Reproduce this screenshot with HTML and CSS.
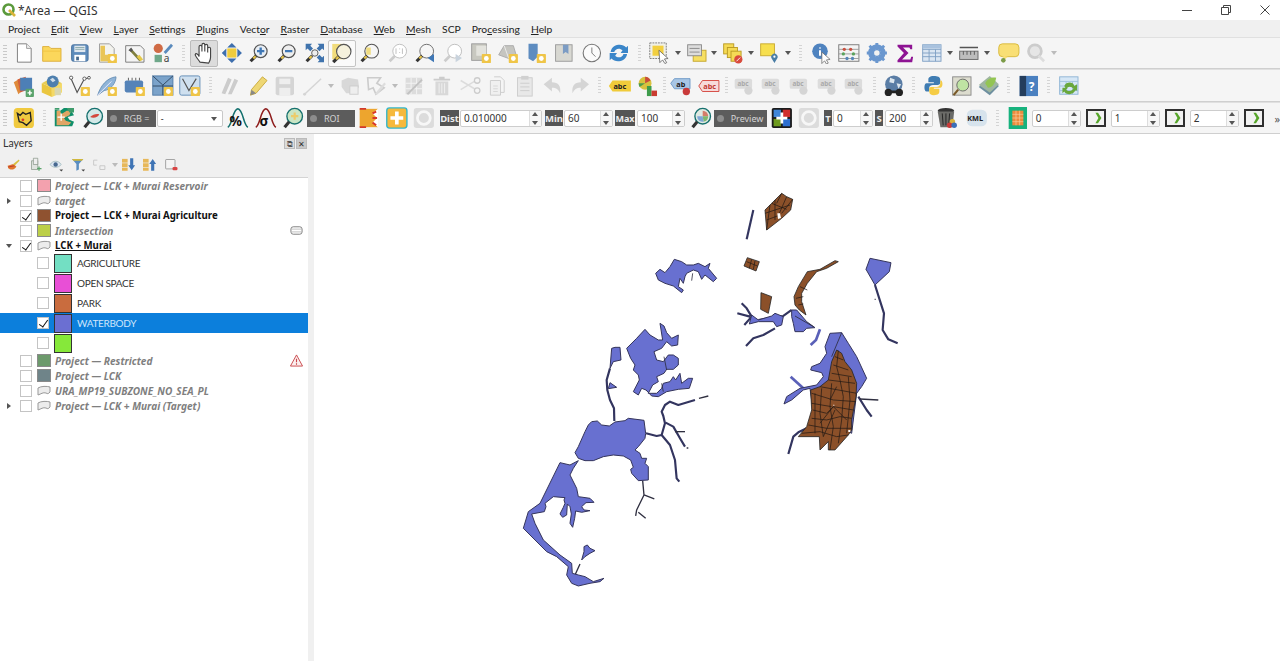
FILE: index.html
```html
<!DOCTYPE html>
<html lang="en">
<head>
<meta charset="utf-8">
<title>*Area — QGIS</title>
<link rel="stylesheet" href="styles.css">
</head>
<body>
<svg class="sprite" aria-hidden="true">
<defs>
<g id="st"><rect x="13" y="13" width="10" height="10" rx="1" fill="#efc548"/><circle cx="18" cy="18" r="2.6" fill="#fff"/></g>
<g id="mgl"><path d="M9 15L3 21" stroke="#333" stroke-width="3.4"/><path d="M8.5 15.500L6 18" stroke="#e8c64a" stroke-width="2.4"/></g>
<symbol id="new" viewBox="0 0 24 24"><path d="M5 2h10l5 5v15H5z" fill="#fff" stroke="#777"/><path d="M15 2v5h5" fill="#eee" stroke="#999"/></symbol>
<symbol id="open" viewBox="0 0 24 24"><path d="M2 5h7l2 2h11v14H2z" fill="#fbd75b" stroke="#dcae3a"/><path d="M2 10h20" stroke="#f2c544"/></symbol>
<symbol id="save" viewBox="0 0 24 24"><rect x="3" y="3" width="18" height="18" rx="2" fill="#5d8bbb" stroke="#47719d"/><rect x="6" y="4" width="12" height="7" fill="#dfe7ef"/><path d="M7 6h10M7 8h10" stroke="#8aa"/><rect x="6" y="14" width="12" height="7" fill="#fff"/><rect x="8" y="16" width="3" height="4" fill="#48698c"/></symbol>
<symbol id="prj" viewBox="0 0 24 24"><path d="M4 2h11l5 5v15H4z" fill="#f3f3ee" stroke="#999"/><path d="M5 4h5v10h7v7H5z" fill="#e9c556"/><use href="#st"/></symbol>
<symbol id="wrench" viewBox="0 0 24 24"><path d="M2 4h16l4 4v14H2z" fill="#f4f4f4" stroke="#777"/><path d="M7 8l11 12" stroke="#7f7f3e" stroke-width="3"/><path d="M5 9l3-3 2 3-2 2z" fill="#555"/><path d="M14 16l4 5 3-2-4-5z" fill="#e5c94a"/></symbol>
<symbol id="style" viewBox="0 0 24 24"><circle cx="7" cy="7" r="5" fill="#d06b45"/><path d="M14 12l8-9" stroke="#5b8bbd" stroke-width="3"/><rect x="3" y="14" width="8" height="8" fill="#6fa88a"/><text x="13" y="22" class="ta">a</text></symbol>
<symbol id="hand" viewBox="0 0 24 24"><path d="M8 21c-2-3-5-6-5-8 1-2 3 0 4 2V5c0-2 3-2 3 0v5-7c0-2 3-2 3 0v7-6c0-2 3-2 3 0v7-4c0-2 3-2 3 0v9c0 3-1 4-2 6z" fill="#fff" stroke="#444" stroke-width="1.200"/></symbol>
<symbol id="pansel" viewBox="0 0 24 24"><rect x="7" y="7" width="10" height="10" fill="#f0cc3d"/><path d="M12 1l5 5H7zM12 23l-5-5h10zM1 12l5-5v10zM23 12l-5 5V7z" fill="#3e6fae"/></symbol>
<symbol id="zin" viewBox="0 0 24 24"><circle cx="14" cy="10" r="7" fill="#e8eef5" stroke="#555" stroke-width="1.300"/><use href="#mgl"/><path d="M14 6v8M10 10h8" stroke="#3f77b5" stroke-width="2.600"/></symbol>
<symbol id="zout" viewBox="0 0 24 24"><circle cx="14" cy="10" r="7" fill="#eee" stroke="#555" stroke-width="1.300"/><use href="#mgl"/><path d="M10 10h8" stroke="#3f77b5" stroke-width="2.600"/></symbol>
<symbol id="zfull" viewBox="0 0 24 24"><path d="M2 2h7l-2 2 3 3-3 3-3-3-2 2zM22 2v7l-2-2-3 3-3-3 3-3-2-2zM22 22h-7l2-2-3-3 3-3 3 3 2-2z" fill="#3f73ad"/><circle cx="12" cy="12" r="3.500" fill="#eee" stroke="#555"/><use href="#mgl"/></symbol>
<symbol id="zsel" viewBox="0 0 24 24"><rect x="2" y="2" width="14" height="16" fill="#f1dc7b"/><circle cx="14" cy="10" r="7.500" fill="#f6f2dc" stroke="#555" stroke-width="1.200"/><use href="#mgl"/></symbol>
<symbol id="zlay" viewBox="0 0 24 24"><circle cx="14" cy="10" r="7.500" fill="#f6f6f6" stroke="#555" stroke-width="1.200"/><path d="M8 6h5v8H8z" fill="#f0dc80"/><use href="#mgl"/></symbol>
<symbol id="z11" viewBox="0 0 24 24"><circle cx="14" cy="10" r="7.500" fill="#fff" stroke="#bbb"/><path d="M10 7v6M14 7v1M14 11v1M17 7v6" stroke="#bbb"/><path d="M9 15l-6 6" stroke="#ccc" stroke-width="3"/></symbol>
<symbol id="zlast" viewBox="0 0 24 24"><circle cx="14" cy="10" r="7.500" fill="#f6f6f6" stroke="#666"/><use href="#mgl"/><path d="M22 13v9l-7-4.500z" fill="#3f77b5"/></symbol>
<symbol id="znext" viewBox="0 0 24 24"><circle cx="14" cy="10" r="7.500" fill="#fff" stroke="#bbb"/><path d="M9 15l-6 6" stroke="#ccc" stroke-width="3"/><path d="M15 13v9l7-4.500z" fill="#c9d3dd"/></symbol>
<symbol id="nmap" viewBox="0 0 24 24"><rect x="2" y="2" width="16" height="18" fill="#c8c8c0" stroke="#999"/><rect x="7" y="4" width="11" height="11" fill="#e3e3dd"/><use href="#st"/></symbol>
<symbol id="n3d" viewBox="0 0 24 24"><path d="M2 14L8 4h10l3 10-8 4z" fill="#c5c5c0" stroke="#aaa"/><path d="M8 4l5 14" stroke="#eee"/><use href="#st"/></symbol>
<symbol id="bmk" viewBox="0 0 24 24"><path d="M4 2h10v14l-5 5-5-3z" fill="#5d8cc0"/><use href="#st"/></symbol>
<symbol id="bmk2" viewBox="0 0 24 24"><rect x="3" y="3" width="18" height="18" fill="#d8d8d2" stroke="#999"/><path d="M11 3h6v10l-3-2-3 2z" fill="#7c9cc4"/></symbol>
<symbol id="clock" viewBox="0 0 24 24"><circle cx="12" cy="12" r="9.500" fill="#fbfbfb" stroke="#777" stroke-width="1.200"/><path d="M12 6v6l4 4" stroke="#777" fill="none"/></symbol>
<symbol id="ref" viewBox="0 0 24 24"><path d="M3 11C4 5 9 3 13 3c3 0 5 1 7 3l2-2v8h-8l2-3c-3-3-8-2-9 2zM21 13c-1 6-6 8-10 8-3 0-5-1-7-3l-2 2v-8h8l-2 3c3 3 8 2 9-2z" fill="#3b86c9"/></symbol>
<symbol id="sel" viewBox="0 0 24 24"><rect x="1" y="1" width="18" height="17" fill="#f0f0e8" stroke="#777" stroke-dasharray="2 1"/><rect x="4" y="4" width="12" height="11" fill="#f2cf3f"/><path d="M11 9l10 9-4 .5 2.500 4-2 1-2.500-4-3 3z" fill="#fff" stroke="#555" stroke-width=".8"/></symbol>
<symbol id="form" viewBox="0 0 24 24"><rect x="8" y="9" width="14" height="12" fill="#f6df62" stroke="#c4a52b"/><rect x="2" y="3" width="15" height="12" fill="#ddd" stroke="#888"/><path d="M4 7h11M4 11h11" stroke="#888"/></symbol>
<symbol id="desel" viewBox="0 0 24 24"><rect x="2" y="2" width="11" height="11" fill="#f5da55" stroke="#b99a22"/><rect x="6" y="6" width="11" height="11" fill="#f5da55" stroke="#b99a22"/><rect x="10" y="10" width="11" height="11" fill="#f5da55" stroke="#b99a22"/><circle cx="18" cy="19" r="4.500" fill="#d94a3e"/><path d="M16 21l4-4" stroke="#fff"/></symbol>
<symbol id="loc" viewBox="0 0 24 24"><rect x="2" y="2" width="15" height="13" fill="#f7df4e" stroke="#c9a92c"/><path d="M17 23l-3-5a3.500 3.500 0 1 1 6 0z" fill="#4a7ea6"/><circle cx="17" cy="16" r="1.200" fill="#fff"/></symbol>
<symbol id="info" viewBox="0 0 24 24"><circle cx="10" cy="10" r="8.500" fill="#4f83bf"/><path d="M10 6v1M10 9v6" stroke="#fff" stroke-width="2.200"/><path d="M12 11l9 8-4 .5 2 3.500-2 1-2-3.500-3 3z" fill="#fff" stroke="#666" stroke-width=".8"/></symbol>
<symbol id="abac" viewBox="0 0 24 24"><rect x="1" y="3" width="22" height="18" fill="#f4f4f4" stroke="#777"/><path d="M1 8h22M1 13h22M1 18h22" stroke="#999"/><circle cx="7" cy="8" r="1.800" fill="#c9503f"/><circle cx="14" cy="8" r="1.800" fill="#c9503f"/><circle cx="6" cy="13" r="1.800" fill="#5aa25c"/><circle cx="17" cy="13" r="1.800" fill="#5aa25c"/><circle cx="10" cy="18" r="1.800" fill="#5786b9"/><circle cx="16" cy="18" r="1.800" fill="#5786b9"/></symbol>
<symbol id="gear" viewBox="0 0 24 24"><circle cx="12" cy="12" r="7" fill="none" stroke="#6a97cf" stroke-width="5"/><path d="M12 1v22M1 12h22M4 4l16 16M20 4L4 20" stroke="#6a97cf" stroke-width="3.200"/><circle cx="12" cy="12" r="3" fill="#f2f2f2"/></symbol>
<symbol id="sig" viewBox="0 0 24 24"><path d="M4 3h16v5h-2l-1-2H10l6 6-7 7h9l1-3h2l-1 6H4v-2l7-8-7-7z" fill="#8e1493"/></symbol>
<symbol id="tbl" viewBox="0 0 24 24"><rect x="2" y="3" width="20" height="18" fill="#dbe6f2" stroke="#7fa0c4"/><path d="M2 8h20M2 12h20M2 16h20M9 8v13M16 8v13" stroke="#7fa0c4"/><rect x="2" y="3" width="20" height="4" fill="#a9c2de"/></symbol>
<symbol id="rule" viewBox="0 0 24 24"><path d="M2 6h20" stroke="#555" stroke-width="1.500"/><rect x="2" y="10" width="20" height="9" fill="#bdbdbd" stroke="#666"/><path d="M6 10v4M10 10v4M14 10v4M18 10v4" stroke="#555"/></symbol>
<symbol id="cmt" viewBox="0 0 24 24"><rect x="1" y="2" width="22" height="14" rx="4" fill="#f9df75" stroke="#d8b93c"/><path d="M6 15l-1 6 6-5z" fill="#f9df75"/><circle cx="6" cy="20" r="2.500" fill="#7c9b48"/></symbol>
<symbol id="srch" viewBox="0 0 24 24"><circle cx="11" cy="10" r="7" fill="#e6e6e6" stroke="#ccc" stroke-width="3"/><path d="M15 15l6 6" stroke="#ddd" stroke-width="3"/></symbol>
<symbol id="dsm" viewBox="0 0 24 24"><path d="M1 8l8-5 3 12-6 6z" fill="#df8a3a"/><path d="M5 5l9-3 2 14-8 3z" fill="#d2603c"/><rect x="8" y="3" width="13" height="14" fill="#4d7fb6"/><rect x="14" y="15" width="9" height="9" rx="1" fill="#5aa36b"/><path d="M18.500 17v5M16 19.500h5" stroke="#fff" stroke-width="1.600"/></symbol>
<symbol id="sdb" viewBox="0 0 24 24"><path d="M1 9l11 5v10L1 19z" fill="#eac63f"/><path d="M12 14l11-5v10l-11 5z" fill="#f4d964"/><path d="M1 9l11-6 11 6-11 5z" fill="#e7cc55"/><circle cx="13" cy="7" r="6.500" fill="#4e7fae"/><path d="M10 5l3-2 3 3-3 2z" fill="#cfdde9"/><rect x="15" y="14" width="7" height="8" fill="#d8d6b0"/></symbol>
<symbol id="vnode" viewBox="0 0 24 24"><path d="M2 3l7 16 8-15 6-1" fill="none" stroke="#555" stroke-width="1.300"/><circle cx="2.500" cy="3" r="1.800" fill="#fff" stroke="#555"/><circle cx="17" cy="4" r="1.800" fill="#fff" stroke="#555"/><circle cx="22" cy="3" r="1.500" fill="#fff" stroke="#555"/><use href="#st"/></symbol>
<symbol id="feath" viewBox="0 0 24 24"><path d="M2 22C5 12 12 3 22 2c0 6-5 14-13 15z" fill="#8fb4d8" stroke="#6a90b6"/><path d="M2 22L17 7" stroke="#eef" /><use href="#st"/></symbol>
<symbol id="chip" viewBox="0 0 24 24"><rect x="1" y="6" width="20" height="13" rx="2" fill="#5583b8"/><path d="M5 3v3M9 3v3M13 3v3M17 3v3" stroke="#555"/><use href="#st"/></symbol>
<symbol id="mesh" viewBox="0 0 24 24"><rect x="1" y="1" width="22" height="21" fill="#7ba3ca" stroke="#4f7aa6"/><path d="M1 1l11 10L23 1M1 12h22M12 11v11" stroke="#2e4660" stroke-width="1" fill="none"/><use href="#st"/></symbol>
<symbol id="vrt" viewBox="0 0 24 24"><rect x="1" y="1" width="22" height="21" rx="2" fill="#cfe0ef" stroke="#5d89b3"/><path d="M4 4l7 13 8-13" stroke="#555" fill="none" stroke-width="1.300"/><use href="#st"/></symbol>
<symbol id="pens" viewBox="0 0 24 24"><path d="M3 20L10 3l4 2-7 16zM10 21l7-17 4 2-7 15z" fill="#ccc"/></symbol>
<symbol id="pen" viewBox="0 0 24 24"><path d="M4 22l1-6L17 2l5 4L10 20z" fill="#eed775" stroke="#c9a83a"/><path d="M4 22l1-6 5 4z" fill="#888"/></symbol>
<symbol id="fsave" viewBox="0 0 24 24"><rect x="2" y="2" width="20" height="20" rx="2" fill="#d5d5d5"/><rect x="6" y="4" width="12" height="6" fill="#eee"/><rect x="6" y="14" width="12" height="8" fill="#eee"/></symbol>
<symbol id="fline" viewBox="0 0 24 24"><path d="M3 21L21 4" stroke="#d5d5d5" stroke-width="1.600"/><circle cx="3" cy="21" r="1.600" fill="#d5d5d5"/></symbol>
<symbol id="fpoly" viewBox="0 0 24 24"><path d="M3 6l7-3 11 2 1 8-5 7H8L3 13z" fill="#d8d8d8"/><rect x="12" y="12" width="9" height="9" fill="#eee" stroke="#ccc"/></symbol>
<symbol id="fedit" viewBox="0 0 24 24"><path d="M2 3h14l-4 6 8 5-9 7-3-7-5 2z" fill="none" stroke="#ccc" stroke-width="1.800"/><path d="M11 21L21 9" stroke="#ddd" stroke-width="2.400"/></symbol>
<symbol id="fgrid" viewBox="0 0 24 24"><rect x="3" y="3" width="18" height="18" fill="#dcdcdc"/><path d="M3 9h18M3 15h18M9 3v18M15 3v18" stroke="#f4f4f4"/><path d="M5 21L21 5" stroke="#c2c2c2" stroke-width="2"/></symbol>
<symbol id="ftrash" viewBox="0 0 24 24"><path d="M3 5h18M9 3h6" stroke="#ccc" stroke-width="2"/><path d="M5 7h14v15H5z" fill="#d8d8d8"/><path d="M9 9v11M12 9v11M15 9v11" stroke="#f2f2f2"/></symbol>
<symbol id="fcut" viewBox="0 0 24 24"><path d="M2 6l15 9M2 16l15-9" stroke="#dcdcdc" stroke-width="1.600"/><circle cx="20" cy="6" r="3" fill="none" stroke="#ccc" stroke-width="1.400"/><circle cx="20" cy="17" r="3" fill="none" stroke="#ccc" stroke-width="1.400"/></symbol>
<symbol id="fcopy" viewBox="0 0 24 24"><path d="M5 6h11v16H5z" fill="#f0f0f0" stroke="#ccc"/><path d="M9 2h7l4 4v13h-4" fill="none" stroke="#ccc"/><path d="M8 12h5M8 15h5M8 18h5" stroke="#d5d5d5"/></symbol>
<symbol id="fpaste" viewBox="0 0 24 24"><rect x="4" y="3" width="16" height="20" fill="#e8e8e8" stroke="#ccc"/><rect x="8" y="1" width="8" height="4" fill="#d0d0d0"/><path d="M7 9h10M7 13h10M7 17h10" stroke="#ccc"/></symbol>
<symbol id="fundo" viewBox="0 0 24 24"><path d="M2 10l9-7v5c7 0 10 4 9 12-2-4-4-6-9-6v4z" fill="#d5d5d5"/></symbol>
<symbol id="fredo" viewBox="0 0 24 24"><path d="M22 10l-9-7v5C6 8 3 12 4 20c2-4 4-6 9-6v4z" fill="#d5d5d5"/></symbol>
<symbol id="lab" viewBox="0 0 24 24"><path d="M0 12l4-6h20v12H4z" fill="#f0cb3a"/><text x="5" y="15.500" class="tl">abc</text></symbol>
<symbol id="lstyle" viewBox="0 0 24 24"><circle cx="9" cy="9" r="7" fill="#d8c23e"/><path d="M9 9V2a7 7 0 0 1 6 4z" fill="#c94c3c"/><path d="M9 9l-6 4a7 7 0 0 1-1-4z" fill="#4c9c4f"/><rect x="11" y="12" width="5" height="11" fill="#3e9c4c"/><rect x="16" y="17" width="6" height="6" fill="#c93c30"/></symbol>
<symbol id="lpin" viewBox="0 0 24 24"><path d="M1 9l4-5h17v11H5z" fill="#a8c6e6" stroke="#6b97c6"/><text x="7" y="13" class="tl">ab</text><circle cx="18" cy="18" r="4" fill="#c93a3a"/></symbol>
<symbol id="lred" viewBox="0 0 24 24"><path d="M1 12l4-6h18v12H5z" fill="#f7dada" stroke="#d3443c"/><text x="6" y="15.500" class="tr">abc</text></symbol>
<symbol id="fl" viewBox="0 0 24 24"><rect x="2" y="4" width="19" height="11" rx="2" fill="#dcdcdc"/><text x="5" y="12.500" class="tf">abc</text><circle cx="17" cy="17" r="4.500" fill="#d5d5d5"/></symbol>
<symbol id="globe" viewBox="0 0 24 24"><circle cx="12" cy="10" r="9.500" fill="#5a7da5"/><path d="M8 3l5 2-1 4-5-1zM15 9l5 1-3 5z" fill="#dce6ee"/><circle cx="6" cy="19" r="4" fill="#222"/><circle cx="18" cy="19" r="4" fill="#222"/><path d="M9 17h6v3H9z" fill="#222"/></symbol>
<symbol id="py" viewBox="0 0 24 24"><path d="M12 1c-5 0-6 2-6 4v3h6v1H4c-3 0-3 9 0 9h3v-4c0-2 2-3 4-3h5c2 0 3-1 3-3V5c0-3-3-4-7-4z" fill="#3f7cb2"/><path d="M12 22c5 0 6-2 6-4v-3h-6v-1h7c3 0 3-7 1-8h-1v3c0 3-2 4-4 4H9c-2 0-2 2-2 3v2c0 3 2 4 5 4z" fill="#f5cc45"/></symbol>
<symbol id="mgfy" viewBox="0 0 24 24"><rect x="2" y="2" width="20" height="20" fill="#dcdcce" stroke="#888"/><circle cx="13" cy="11" r="6.500" fill="#bfe4a3" stroke="#666"/><path d="M8 16l-5 6" stroke="#7a5a2a" stroke-width="2.400"/></symbol>
<symbol id="plug" viewBox="0 0 24 24"><path d="M1 13L13 3l10 9-10 10z" fill="#6e8fa0"/><path d="M1 11L13 1l10 9-10 9z" fill="#9fb6a0"/><path d="M8 9c2-5 8-7 12-6-1 6-4 11-9 11z" fill="#93c553"/></symbol>
<symbol id="help" viewBox="0 0 24 24"><rect x="2" y="1" width="20" height="22" fill="#4a80c0"/><rect x="2" y="1" width="7" height="22" fill="#243d5c"/><text x="12" y="17" class="tq">?</text></symbol>
<symbol id="sync" viewBox="0 0 24 24"><rect x="2" y="2" width="20" height="19" fill="#d6e7f6" stroke="#8cb3d4"/><path d="M2 7h20M2 12h20M2 17h20M9 7v14M16 7v14" stroke="#9fc1dc"/><path d="M7 12c2-5 10-5 11 0l3-2v7h-6l2-2c-2-3-6-3-8 0zM19 17c-2 5-10 5-12 1l-2 2v-6h6l-2 2c2 2 5 2 7 0z" fill="#69a83c"/></symbol>
<symbol id="scp" viewBox="0 0 24 24"><rect x="1" y="1" width="22" height="22" rx="4" fill="#f0c93f"/><path d="M5 7l3 2 3-3 3 2 5-2 1 9-5 5-4-3-4-1z" fill="none" stroke="#222" stroke-width="1.500"/><circle cx="11" cy="14" r="1.500" fill="#d63b2c"/></symbol>
<symbol id="roig" viewBox="0 0 24 24"><path d="M1 21V3l6 1 4-3h11l-2 5 2 3-7 2 2 3 5 2-2 5H8z" fill="#0f8f6a"/><path d="M3 20V4h4l1 4 6-4 5 0-2 5-6 3 2 3 6 2-3 3z" fill="#e0a565"/><path d="M8 7v8M4 11h8" stroke="#fff" stroke-width="1.500"/><path d="M14 1h8v5h-5zM1 1h5v2H1z" fill="#3f9c6c"/></symbol>
<symbol id="roi" viewBox="0 0 24 24"><rect x="2" y="2" width="20" height="20" fill="#eda52e"/><path d="M22 2l-6 5 5 5-5 5 6 5z" fill="#fff"/><path d="M2 2l7 0M2 22l7 0" stroke="#d23a2c" stroke-width="2"/><path d="M16 7l4-2M16 12l5 0M16 17l4 3" stroke="#d8352a" stroke-width="2"/></symbol>
<symbol id="zred" viewBox="0 0 24 24"><circle cx="14" cy="10" r="8.500" fill="#d3e9e8" stroke="#17716f" stroke-width="1.500"/><path d="M9 11c3-3 7-4 10-3-1 3-6 5-10 3z" fill="#d4483c"/><path d="M8 16l-5 6" stroke="#333" stroke-width="3.400"/></symbol>
<symbol id="zgreen" viewBox="0 0 24 24"><circle cx="14" cy="10" r="8.500" fill="#c9e5c4" stroke="#17716f" stroke-width="1.500"/><path d="M14 6v8M10 10h8" stroke="#eccb6a" stroke-width="2.400"/><path d="M8 16l-5 6" stroke="#333" stroke-width="3.400"/></symbol>
<symbol id="zrgb" viewBox="0 0 24 24"><circle cx="14" cy="10" r="8.500" fill="#dfe9e2" stroke="#17716f" stroke-width="1.500"/><path d="M14 10V4a6 6 0 0 1 6 6z" fill="#d47d6a"/><path d="M14 10h6a6 6 0 0 1-5 6z" fill="#7fb86f"/><path d="M14 10l1 6a6 6 0 0 1-7-6z" fill="#7fa6d6"/><path d="M8 16l-5 6" stroke="#333" stroke-width="3.400"/></symbol>
<symbol id="cpct" viewBox="0 0 24 24"><path d="M1 22C6 20 6 3 12 2c6 1 6 18 11 20" fill="none" stroke="#14706e" stroke-width="1.700"/><text x="3" y="21" class="tk">%</text></symbol>
<symbol id="csig" viewBox="0 0 24 24"><path d="M1 22C6 20 6 3 12 2c6 1 6 18 11 20" fill="none" stroke="#8f1f1f" stroke-width="1.700"/><text x="5" y="21" class="tk">σ</text></symbol>
<symbol id="addroi" viewBox="0 0 24 24"><rect x="1" y="1" width="22" height="22" rx="3" fill="#f6b93c" stroke="#35b6c9" stroke-width="1.500"/><path d="M12 5v14M5 12h14" stroke="#fff" stroke-width="4"/></symbol>
<symbol id="redo" viewBox="0 0 24 24"><rect x="1" y="1" width="22" height="22" rx="3" fill="#dcdcdc"/><circle cx="12" cy="12" r="7" fill="none" stroke="#f7f7f7" stroke-width="3"/></symbol>
<symbol id="plus" viewBox="0 0 24 24"><rect x="1" y="1" width="22" height="22" rx="2" fill="#1c1c1c"/><rect x="3" y="3" width="8" height="8" fill="#3f86d9"/><rect x="13" y="3" width="8" height="8" fill="#cf2d2d"/><rect x="3" y="13" width="8" height="8" fill="#6d9a1d"/><rect x="13" y="13" width="8" height="8" fill="#2d6fd0"/><path d="M12 6v12M6 12h12" stroke="#fff" stroke-width="3"/></symbol>
<symbol id="bin" viewBox="0 0 24 24"><ellipse cx="11" cy="4" rx="9" ry="3" fill="#333"/><path d="M2 5h18l-2 17H5z" fill="#6b6b68"/><path d="M7 7l1 13M11 7v13M15 7l-1 13" stroke="#222"/><circle cx="18" cy="16" r="3" fill="#d8b23c"/><circle cx="15" cy="20" r="3" fill="#c83a3a"/><circle cx="20" cy="20" r="3" fill="#3b6fb8"/></symbol>
<symbol id="kml" viewBox="0 0 24 24"><rect x="1" y="3" width="22" height="18" rx="6" fill="#d7e3ec"/><text x="1.500" y="15" class="tm">KML</text></symbol>
<symbol id="band" viewBox="0 0 24 24"><rect x="2" y="0" width="20" height="24" fill="#17b27d"/><rect x="6" y="4" width="12" height="16" fill="#ee8b3d"/><path d="M6 8h12M6 12h12M6 16h12M10 4v16M14 4v16" stroke="#f5d0a0" stroke-width=".7"/></symbol>
<symbol id="brush" viewBox="0 0 24 24"><path d="M3 14l9-3 5 4c-2 5-9 7-13 3z" fill="#e0782e"/><path d="M12 11l9-7 1 2-8 8z" fill="#d8c03f"/><path d="M4 16l10-2" stroke="#c23b2c" stroke-width="2"/></symbol>
<symbol id="addlay" viewBox="0 0 24 24"><path d="M6 6h10v14H6z" fill="#dfe3df" stroke="#7a8a7a"/><path d="M9 2h7v10H9z" fill="#eee" stroke="#7a8a7a"/><path d="M18 15v7M15 18.500h7" stroke="#5aa36b" stroke-width="2"/></symbol>
<symbol id="eye" viewBox="0 0 24 24"><path d="M2 12c5-7 13-7 18 0-5 6-13 6-18 0z" fill="#dde6f2" stroke="#8aa"/><circle cx="11" cy="12" r="3.500" fill="#46688f"/><path d="M17 20h6l-3 3z" fill="#444"/></symbol>
<symbol id="filt" viewBox="0 0 24 24"><path d="M2 3h18l-7 8v9l-4 2V11z" fill="#5a8ec2"/><path d="M2 3h18l-2 3H4z" fill="#d2b83c"/><path d="M17 20h6l-3 3z" fill="#444"/></symbol>
<symbol id="grp" viewBox="0 0 24 24"><path d="M3 5h6M3 5v8h5M13 14h8v6h-8z" fill="none" stroke="#c8c8c8" stroke-width="1.500"/></symbol>
<symbol id="expd" viewBox="0 0 24 24"><rect x="2" y="3" width="9" height="6" fill="#e7b85a"/><rect x="2" y="10" width="9" height="6" fill="#e7b85a"/><rect x="2" y="17" width="9" height="5" fill="#e7b85a"/><path d="M15 2h5v11h3l-5.500 8L12 13h3z" fill="#3f74b5"/></symbol>
<symbol id="coll" viewBox="0 0 24 24"><rect x="2" y="3" width="9" height="6" fill="#e7b85a"/><rect x="2" y="10" width="9" height="6" fill="#e7b85a"/><rect x="2" y="17" width="9" height="5" fill="#e7b85a"/><path d="M15 22h5V11h3L17.500 3 12 11h3z" fill="#3f74b5"/></symbol>
<symbol id="rem" viewBox="0 0 24 24"><rect x="3" y="4" width="15" height="15" rx="1" fill="#f4f4f4" stroke="#777"/><rect x="14" y="16" width="8" height="5" rx="2" fill="#d94545"/></symbol>
<symbol id="gico" viewBox="0 0 14 12"><path d="M1 3c3-2 9-2 12-1v5c-2 2-2 2-4 1-3-1-5 1-8 2z" fill="#ececec" stroke="#999"/></symbol>
<symbol id="warn" viewBox="0 0 14 14"><path d="M7 1l6.500 12H.5z" fill="#fbeeee" stroke="#c9454a"/><path d="M7 5v4M7 10v1.500" stroke="#c9454a" stroke-width="1.200"/></symbol>
<symbol id="mem" viewBox="0 0 14 14"><rect x="1" y="3" width="12" height="8" rx="2.500" fill="#fff" stroke="#777"/><path d="M1 5.500h12M1 8.500h12" stroke="#bbb"/></symbol>
<symbol id="chev" viewBox="0 0 14 14"><path d="M4 1h3l4 6-4 6H4l3.500-6z" fill="#57a62a"/></symbol>
</defs>
</svg>

<header class="titlebar">
  <svg class="qlogo" viewBox="0 0 14 14"><circle cx="6.500" cy="6.500" r="5" fill="none" stroke="#5b9a3c" stroke-width="2.600"/><path d="M7 7l6 6" stroke="#d9b43a" stroke-width="2.600"/></svg>
  <span class="wintitle">*Area — QGIS</span>
  <div class="winctl">
    <svg class="wc" viewBox="0 0 12 12"><path d="M1 6.500h10" stroke="#444"/></svg>
    <svg class="wc" viewBox="0 0 12 12"><path d="M1.500 3.500h7v7h-7zM3.500 3.500v-2h7v7h-2" fill="none" stroke="#444"/></svg>
    <svg class="wc" viewBox="0 0 12 12"><path d="M1.500 1.500l9 9M10.500 1.500l-9 9" stroke="#444"/></svg>
  </div>
</header>

<nav class="menubar">
  <span class="m">Pro<u>j</u>ect</span>
  <span class="m"><u>E</u>dit</span>
  <span class="m"><u>V</u>iew</span>
  <span class="m"><u>L</u>ayer</span>
  <span class="m"><u>S</u>ettings</span>
  <span class="m"><u>P</u>lugins</span>
  <span class="m">Vect<u>o</u>r</span>
  <span class="m"><u>R</u>aster</span>
  <span class="m"><u>D</u>atabase</span>
  <span class="m"><u>W</u>eb</span>
  <span class="m"><u>M</u>esh</span>
  <span class="m">SCP</span>
  <span class="m">Pro<u>c</u>essing</span>
  <span class="m"><u>H</u>elp</span>
</nav>

<section class="tb tb1">
  <i class="grip"></i>
  <svg class="i"><use href="#new"/></svg><svg class="i"><use href="#open"/></svg><svg class="i"><use href="#save"/></svg><svg class="i"><use href="#prj"/></svg><svg class="i"><use href="#wrench"/></svg><svg class="i"><use href="#style"/></svg>
  <i class="sep s14"></i>
  <svg class="i on"><use href="#hand"/></svg><svg class="i"><use href="#pansel"/></svg><svg class="i"><use href="#zin"/></svg><svg class="i"><use href="#zout"/></svg><svg class="i"><use href="#zfull"/></svg><svg class="i box"><use href="#zsel"/></svg><svg class="i"><use href="#zlay"/></svg><svg class="i"><use href="#z11"/></svg><svg class="i"><use href="#zlast"/></svg><svg class="i"><use href="#znext"/></svg><svg class="i"><use href="#nmap"/></svg><svg class="i"><use href="#n3d"/></svg><svg class="i"><use href="#bmk"/></svg><svg class="i"><use href="#bmk2"/></svg><svg class="i"><use href="#clock"/></svg><svg class="i"><use href="#ref"/></svg>
  <i class="sep s13"></i>
  <svg class="i"><use href="#sel"/></svg><b class="caret"></b><svg class="i"><use href="#form"/></svg><b class="caret"></b><svg class="i"><use href="#desel"/></svg><b class="caret"></b><svg class="i"><use href="#loc"/></svg><b class="caret"></b>
  <i class="sep s15"></i>
  <svg class="i"><use href="#info"/></svg><svg class="i"><use href="#abac"/></svg><svg class="i"><use href="#gear"/></svg><svg class="i"><use href="#sig"/></svg><svg class="i"><use href="#tbl"/></svg><b class="caret"></b><svg class="i"><use href="#rule"/></svg><b class="caret"></b><i class="s3"></i><svg class="i"><use href="#cmt"/></svg><svg class="i"><use href="#srch"/></svg><b class="caret light"></b>
</section>

<section class="tb tb2">
  <i class="grip"></i>
  <svg class="i"><use href="#dsm"/></svg><svg class="i"><use href="#sdb"/></svg><svg class="i"><use href="#vnode"/></svg><svg class="i"><use href="#feath"/></svg><svg class="i"><use href="#chip"/></svg><svg class="i"><use href="#mesh"/></svg><svg class="i"><use href="#vrt"/></svg>
  <i class="sep s12"></i>
  <svg class="i"><use href="#pens"/></svg><svg class="i"><use href="#pen"/></svg><svg class="i"><use href="#fsave"/></svg><svg class="i"><use href="#fline"/></svg><b class="caret light"></b><svg class="i"><use href="#fpoly"/></svg><svg class="i"><use href="#fedit"/></svg><b class="caret light"></b><svg class="i"><use href="#fgrid"/></svg><svg class="i"><use href="#ftrash"/></svg><svg class="i"><use href="#fcut"/></svg><svg class="i"><use href="#fcopy"/></svg><svg class="i"><use href="#fpaste"/></svg><svg class="i"><use href="#fundo"/></svg><svg class="i"><use href="#fredo"/></svg>
  <i class="sep s12"></i>
  <svg class="i"><use href="#lab"/></svg><svg class="i"><use href="#lstyle"/></svg>
  <i class="sep s6"></i>
  <svg class="i"><use href="#lpin"/></svg><svg class="i"><use href="#lred"/></svg>
  <i class="sep s7"></i>
  <svg class="i"><use href="#fl"/></svg><svg class="i"><use href="#fl"/></svg><svg class="i"><use href="#fl"/></svg><svg class="i"><use href="#fl"/></svg><svg class="i"><use href="#fl"/></svg>
  <i class="sep s12"></i>
  <svg class="i"><use href="#globe"/></svg>
  <i class="sep s12"></i>
  <svg class="i"><use href="#py"/></svg><svg class="i"><use href="#mgfy"/></svg><svg class="i"><use href="#plug"/></svg>
  <i class="sep s12"></i>
  <svg class="i"><use href="#help"/></svg>
  <i class="sep s12"></i>
  <svg class="i"><use href="#sync"/></svg>
</section>

<section class="tb tb3">
  <i class="grip"></i>
  <svg class="i"><use href="#scp"/></svg>
  <i class="sep s14"></i>
  <svg class="i"><use href="#roig"/></svg><svg class="i"><use href="#zred"/></svg>
  <span class="pill rgb"><i class="dot"></i>RGB =</span>
  <span class="combo">-<b class="caret in"></b></span>
  <svg class="i"><use href="#cpct"/></svg><svg class="i"><use href="#csig"/></svg><svg class="i"><use href="#zgreen"/></svg>
  <span class="pill roil"><i class="dot"></i>ROI</span>
  <svg class="i"><use href="#roi"/></svg><svg class="i"><use href="#addroi"/></svg><svg class="i"><use href="#redo"/></svg>
  <span class="tag tag-dist">Dist</span><span class="spin sp-dist">0.010000<b class="ar"></b></span>
  <span class="tag tag-min">Min</span><span class="spin sp-min">60<b class="ar"></b></span>
  <span class="tag tag-max">Max</span><span class="spin sp-max">100<b class="ar"></b></span>
  <i class="s2"></i>
  <svg class="i"><use href="#zrgb"/></svg>
  <span class="pill prev"><i class="dot"></i>Preview</span>
  <svg class="i"><use href="#plus"/></svg><svg class="i"><use href="#redo"/></svg>
  <span class="tag tag-t">T</span><span class="spin sp-t">0<b class="ar"></b></span>
  <span class="tag tag-s">S</span><span class="spin sp-s">200<b class="ar"></b></span>
  <svg class="i"><use href="#bin"/></svg><i class="s2"></i><svg class="i"><use href="#kml"/></svg>
  <i class="sep s14"></i>
  <svg class="i"><use href="#band"/></svg>
  <span class="spin sp-b">0<b class="ar"></b></span><span class="go"><svg class="ch"><use href="#chev"/></svg></span>
  <span class="spin sp-b">1<b class="ar"></b></span><span class="go"><svg class="ch"><use href="#chev"/></svg></span>
  <span class="spin sp-b">2<b class="ar"></b></span><span class="go"><svg class="ch"><use href="#chev"/></svg></span>
  <span class="more">»</span>
</section>

<main class="work">
  <aside class="dock">
    <div class="dock-head"><span class="dock-title">Layers</span>
      <span class="dock-btns"><i class="db">⧉</i><i class="db dark">✕</i></span></div>
    <div class="dock-tools">
      <svg class="t"><use href="#brush"/></svg><svg class="t"><use href="#addlay"/></svg><svg class="t"><use href="#eye"/></svg><svg class="t"><use href="#filt"/></svg><svg class="t"><use href="#grp"/></svg><b class="caret light"></b><svg class="t t2"><use href="#expd"/></svg><svg class="t"><use href="#coll"/></svg><svg class="t"><use href="#rem"/></svg>
    </div>
    <div class="tree">
      <div class="row"><i class="tw"></i><i class="cb"></i><i class="sw c1"></i><span class="nm gi">Project — LCK + Murai Reservoir</span></div>
      <div class="row"><i class="tw cl"></i><i class="cb"></i><svg class="gp"><use href="#gico"/></svg><span class="nm gi">target</span></div>
      <div class="row"><i class="tw"></i><i class="cb ck"></i><i class="sw c2"></i><span class="nm bd">Project — LCK + Murai Agriculture</span></div>
      <div class="row"><i class="tw"></i><i class="cb"></i><i class="sw c3"></i><span class="nm gi">Intersection</span><svg class="ind"><use href="#mem"/></svg></div>
      <div class="row"><i class="tw op"></i><i class="cb ck"></i><svg class="gp"><use href="#gico"/></svg><span class="nm bd ul">LCK + Murai</span></div>
      <div class="sub"><i class="cb"></i><i class="big c4"></i><span class="cls">AGRICULTURE</span></div>
      <div class="sub"><i class="cb"></i><i class="big c5"></i><span class="cls">OPEN SPACE</span></div>
      <div class="sub"><i class="cb"></i><i class="big c6"></i><span class="cls">PARK</span></div>
      <div class="sub cur"><i class="cb ck"></i><i class="big c7"></i><span class="cls">WATERBODY</span></div>
      <div class="sub"><i class="cb"></i><i class="big c8"></i><span class="cls"></span></div>
      <div class="row"><i class="tw"></i><i class="cb"></i><i class="sw c9"></i><span class="nm gi">Project — Restricted</span><svg class="ind"><use href="#warn"/></svg></div>
      <div class="row"><i class="tw"></i><i class="cb"></i><i class="sw c10"></i><span class="nm gi">Project — LCK</span></div>
      <div class="row"><i class="tw"></i><i class="cb"></i><svg class="gp"><use href="#gico"/></svg><span class="nm gi">URA_MP19_SUBZONE_NO_SEA_PL</span></div>
      <div class="row"><i class="tw cl"></i><i class="cb"></i><svg class="gp"><use href="#gico"/></svg><span class="nm gi">Project — LCK + Murai (Target)</span></div>
    </div>
  </aside>
  <div class="canvas">
    <svg class="map" viewBox="314 134 966 527" aria-label="Map canvas">
      <g transform="translate(510 310) scale(.3333)">
        <path class="r" d="M398 512L402 555 380 600 377 618M402 555L433 567M385 607L407 625"/>
        <path class="r rb" d="M408 370L440 378 455 375 465 340 460 318 455 305 465 285 480 275 505 285 555 270"/>
        <path class="r" d="M567 265L595 258"/>
        <path class="r rb" d="M455 375L480 405 495 450 500 505 508 515M467 338L490 350 510 385 525 410"/>
        <path class="r" d="M495 365H525"/>
        <path class="r rb" d="M300 175L290 210 292 240 300 270 312 295 313 333"/>
        <path class="r" d="M210 762L195 795M530 414h5"/>
        <path class="w" d="M245 335L262 333 275 345 298 348 315 336 345 332 355 325 402 331 407 370 405 385 385 410 375 420 390 430 395 445 410 445 405 460 415 470 415 510 385 512 365 490 362 478 370 472 362 450 340 438 310 435 280 440 250 452 225 452 205 445 195 428 205 410 225 365 235 345Z"/>
        <path class="w" d="M150 458L180 465 205 452 190 475 180 495 200 535 205 560 240 565 252 577 228 578 215 590 222 600 240 602 215 607 197 603 194 625 188 652 180 640 184 612 180 590 172 582 170 615 158 622 150 612 160 592 165 580 162 570 165 563 130 560 105 580 108 590 103 605 65 612 75 640 100 690 150 735 185 760 187 790 205 795 225 800 250 815 282 805 270 815 240 820 205 828 185 820 170 795 175 770 140 740 110 725 40 655 55 605 90 580Z"/>
        <path class="w" d="M232 705L240 715 255 722 240 730 225 740 215 750 222 725 222 710Z"/>
        <path class="w" d="M405 58L420 75 445 90 458 90 450 40 462 48 470 68 485 85 505 75 503 105 485 108 470 95 455 115 432 125 440 150 460 155 475 135 490 135 505 145 505 165 490 178 470 178 462 190 440 200 445 215 428 225 415 250 440 250 455 235 460 220 480 215 490 200 497 210 510 190 515 220 535 205 548 205 538 235 505 238 470 245 445 260 425 258 408 240 395 235 385 255 370 245 388 210 385 195 370 180 375 165 362 145 350 115 380 85Z"/>
        <path class="w" d="M315 112L330 112 333 150 310 155 300 175 305 115ZM300 218L320 232 295 236Z"/>
        <path class="l" d="M462 140L470 180M455 220L460 245"/>
      </g>
      <g transform="translate(645 250) scale(.3333)">
        <path class="w" d="M32 70L45 58 60 68 75 50 88 28 110 35 125 45 145 45 160 40 180 50 195 40 190 55 215 85 205 95 180 75 170 88 160 65 145 60 125 70 120 80 115 100 105 85 100 110 115 120 110 128 85 108 60 100 40 90Z"/>
        <path class="l" d="M143 70L140 92"/>
      </g>
      <g transform="translate(720 180) scale(.3333)">
        <path class="r rb" d="M100 90L80 178"/>
        <path class="b" d="M135 90L155 70 185 40 200 50 218 58 212 90 185 115 140 150Z"/>
        <path class="g" d="M150 75L140 150M165 60L165 120M185 40L170 70M200 50L178 100M218 58L185 100M135 100L210 75M140 120L180 105M155 70L200 88"/>
        <path class="hole" d="M172 100h8l3 14-9 3z"/>
        <path class="b" d="M82 233L118 245 108 273 72 258Z"/>
        <path class="g" d="M80 245L112 258M95 238L88 265M105 243L100 268"/>
        <path class="b" d="M123 338L155 350 145 400 122 388Z"/>
        <path class="r rb" d="M65 370L80 385 95 410 73 435M52 400L90 410M165 445L130 465 100 475 78 498M115 420L190 408 215 390"/>
        <path class="w" d="M95 405L115 420 155 408 165 400 190 410 185 435 170 440 160 425 115 425 88 432Z"/>
        <path class="w" d="M215 390L230 390 260 425 285 443 260 445 250 455 225 455 220 430 215 410Z"/>
        <path class="l" d="M225 408L280 440"/>
        <path class="b" d="M345 242L355 245 320 265 290 275 262 310 245 340 245 365 258 405 238 390 225 375 222 350 235 320 262 275 300 268Z"/>
        <path class="g" d="M240 320L262 330M228 355L250 350M235 375L250 372"/>
        <path class="rw" d="M300 448L288 480 272 495"/>
        <path class="w" d="M450 235L513 248 508 275 465 315 438 268Z"/>
        <path class="r rb" d="M465 315L492 400 488 450 505 478 533 490"/>
        <path class="r" d="M464 358h3"/>
        <path class="r rb" d="M205 822L220 770 235 757 260 745M415 650L440 690 455 710"/>
        <path class="r" d="M420 657L475 660"/>
        <path class="rw" d="M212 590L250 625"/>
        <path class="w" d="M330 460L365 458 385 490 410 530 440 595 425 620 410 640 400 720 395 760 280 700 270 625 250 630 215 660 192 672 200 650 240 625 290 615 310 590 305 578 272 570 275 560 300 550 320 520 315 500Z"/>
        <path class="l" d="M365 458L335 530"/>
        <path class="b" d="M350 510L365 520 375 545 395 570 410 610 408 650 395 720 395 750 385 765 345 810 325 810 325 785 300 810 298 770 235 770 260 740 275 690 272 630 300 620 325 600 335 545Z"/>
        <path class="g" d="M345 530L370 540M340 555L385 570M335 580L395 590M325 600L405 610M300 620L410 640M275 640L340 660 408 665M275 670L335 680M278 690L320 700 340 680 400 690M275 715L320 720 360 710 395 715M265 735L320 745 395 745M245 760L300 755 350 770 385 765"/>
        <path class="g" d="M355 512L350 560 360 600 370 650 365 720 355 790M335 610L330 680 340 740 330 810M305 625L300 700 310 770M285 640L285 760M385 590L390 660 380 760M340 680L300 730M340 680L380 720M345 690L310 770M350 620L330 660"/>
        <path class="hole" d="M385 750h6v6h-6zM340 674h3v3h-3z"/>
      </g>
    </svg>
  </div>
</main>
</body>
</html>
```

FILE: styles.css
```css
* { box-sizing: border-box; }
html, body { margin: 0; height: 100%; overflow: hidden; }
body { width: 1280px; height: 661px; background: #f0f0f0; color: #222; font-family: "Noto Sans", "Liberation Sans", sans-serif; display: flex; flex-direction: column; }
.sprite { position: absolute; width: 0; height: 0; }

.titlebar { height: 20px; background: #fff; display: flex; align-items: center; flex: none; }
.qlogo { width: 14px; height: 14px; margin-left: 2px; }
.wintitle { margin-left: 2px; font-size: 12px; color: #333; }
.winctl { margin-left: auto; display: flex; gap: 27px; padding-right: 9px; }
.wc { width: 12px; height: 12px; }

.menubar { height: 17px; background: #f0f0f0; display: flex; align-items: center; font-family: Lato, "Noto Sans", sans-serif; font-size: 10.300px; color: #222; padding-left: 8px; flex: none; gap: 11px; }
.m u { text-decoration-thickness: 1px; text-underline-offset: 1px; }

.tb { display: flex; align-items: center; flex: none; background: #f5f5f5; border-bottom: 1px solid #cfcfcf; border-top: 1px solid #e0e0e0; }
.tb1 { height: 32px; }
.tb2 { height: 33px; }
.tb3 { height: 32px; }
.i { width: 27.7px; height: 22px; flex: none; }
.i.on { height: 27px; background: #dcdcdc; border: 1px solid #bbb; border-radius: 2px; padding: 1px; }
.i.box { height: 27px; background: #fafafa; border: 1px solid #c4c4c4; border-radius: 2px; padding: 1px; }
.grip { width: 10.200px; flex: none; align-self: stretch; margin: 7px 0; background: repeating-linear-gradient(#c9c9c9 0 1px, transparent 1px 3px) 3px 0 / 4px 100% no-repeat; }
.sep { flex: none; align-self: stretch; margin: 7px 0; background: repeating-linear-gradient(#d4d4d4 0 1px, transparent 1px 3px) center / 3px 100% no-repeat; }
.s2 { width: 2px; flex: none; } .s3 { width: 3px; flex: none; }
.s6 { width: 6px; } .s7 { width: 7px; } .s12 { width: 12px; } .s13 { width: 13px; } .s14 { width: 13.600px; } .s15 { width: 15px; }
.caret { flex: none; width: 9px; height: 3.500px; display: block; position: relative; }
.caret::after { content: ""; position: absolute; left: 1px; top: 0; border: 3.500px solid transparent; border-top: 4px solid #555; border-bottom: 0; }
.caret.light::after { border-top-color: #bbb; }

.pill { flex: none; height: 17px; background: #5c5c5c; color: #d4d4d4; font-size: 9px; display: flex; align-items: center; }
.dot { width: 7px; height: 7px; border-radius: 50%; background: #8d8d8d; margin: 0 7px 0 3px; flex: none; }
.rgb { width: 49px; }
.roil { width: 48px; }
.prev { width: 53px; margin-left: -1px; margin-right: 1px; }
.combo { flex: none; width: 66px; height: 17px; margin: 0 1px; background: #fff; border: 1px solid #c8c8c8; border-radius: 2px; font-size: 9px; padding-left: 3px; display: flex; align-items: center; position: relative; }
.caret.in { position: absolute; right: 3px; top: 6px; }
.tag { flex: none; height: 16px; background: #555; color: #eee; font-size: 9.500px; font-weight: 700; display: flex; align-items: center; justify-content: center; }
.tag-dist { width: 19px; margin-left: 2px; }
.tag-min { width: 18px; margin-left: 3px; }
.tag-max { width: 20px; margin-left: 2px; font-size: 9px; }
.tag-t { width: 8px; margin-left: 1px; }
.tag-s { width: 8px; margin-left: 2px; }
.spin { flex: none; height: 17px; background: #fff; border: 1px solid #cdcdcd; border-radius: 2px; font-size: 10px; padding-left: 3px; display: flex; align-items: center; position: relative; color: #333; }
.ar { position: absolute; right: 0; top: 0; bottom: 0; width: 12px; border-left: 1px solid #ddd; background: #f6f6f6; }
.ar::before, .ar::after { content: ""; position: absolute; left: 2px; border: 3px solid transparent; }
.ar::before { top: 1px; border-bottom: 4px solid #555; border-top: 0; }
.ar::after { bottom: 1px; border-top: 4px solid #555; border-bottom: 0; }
.sp-dist { width: 82px; margin-left: 1px; }
.sp-min { width: 49px; margin-left: 1px; }
.sp-max { width: 48px; margin-left: 2px; }
.sp-t { width: 40px; margin-left: 1px; }
.sp-s { width: 48px; margin-left: 2px; }
.sp-b { width: 49px; }
.go { flex: none; width: 20px; height: 18px; margin: 0 5px; background: #f2f2f2; border: 2px solid #2f2f2f; display: flex; align-items: center; justify-content: flex-end; }
.ch { width: 12px; height: 12px; }
.more { flex: none; margin-left: auto; font-size: 11px; color: #555; }

.work { flex: 1; display: flex; min-height: 0; }
.dock { width: 314px; flex: none; padding-right: 6px; display: flex; flex-direction: column; background: #f0f0f0; }
.dock-head { height: 18px; flex: none; display: flex; align-items: center; justify-content: space-between; padding: 0 1px 0 3px; }
.dock-title { font-family: Lato, "Noto Sans", sans-serif; font-size: 10.500px; color: #333; }
.dock-btns { display: flex; gap: 1px; }
.db { width: 11px; height: 11px; font-size: 8px; line-height: 9px; text-align: center; font-style: normal; color: #555; background: #dcdcdc; border: 1px solid #bbb; }
.db.dark { color: #333; background: #c8c8c8; }
.dock-tools { height: 25px; flex: none; display: flex; align-items: center; padding-left: 3px; gap: 1px; }
.t { width: 20.500px; height: 15px; flex: none; }
.t2 { margin-left: -3px; }
.tree { flex: 1; background: #fff; border-top: 1px solid #d4d4d4; }
.row { height: 15px; display: flex; align-items: center; position: relative; }
.sub { height: 20px; display: flex; align-items: center; position: relative; padding-left: 37px; }
.sub.cur { background: #0c7fdc; }
.tw { width: 20px; height: 15px; flex: none; position: relative; }
.tw.cl::after { content: ""; position: absolute; left: 7px; top: 5px; border-left: 4px solid #555; border-top: 3px solid transparent; border-bottom: 3px solid transparent; }
.tw.op::after { content: ""; position: absolute; left: 6px; top: 6px; border-top: 4px solid #555; border-left: 3.500px solid transparent; border-right: 3.500px solid transparent; }
.cb { width: 12px; height: 12px; flex: none; background: #fff; border: 1px solid #c4c4c4; position: relative; }
.cb.ck::after { content: ""; position: absolute; left: 3px; top: 0; width: 4px; height: 8px; border: solid #111; border-width: 0 1.500px 1.500px 0; transform: rotate(35deg); }
.sw { width: 14px; height: 13px; margin-left: 5px; flex: none; border: 1px solid #8a8a8a; }
.gp { width: 14px; height: 12px; margin-left: 5px; flex: none; }
.big { width: 18px; height: 19px; margin-left: 5px; flex: none; border: 1px solid #333; }
.nm { margin-left: 4px; font-size: 10.100px; white-space: nowrap; }
.gi { color: #7f7f7f; font-weight: 700; font-style: italic; }
.bd { color: #111; font-weight: 700; font-size: 9.700px; }
.ul { text-decoration: underline; }
.cls { margin-left: 5px; font-family: Lato, "Noto Sans", sans-serif; font-size: 10px; letter-spacing: -.3px; color: #333; }
.cur .cls { color: #cfe6fb; }
.ind { position: absolute; left: 290px; top: 1px; width: 13px; height: 13px; }
.c1 { background: #f3a1ae; } .c2 { background: #8f5230; } .c3 { background: #bccf48; }
.c4 { background: #73dfc3; } .c5 { background: #e84fd6; } .c6 { background: #c96c3e; }
.c7 { background: #6b6fd2; } .c8 { background: #86e83a; } .c9 { background: #6d9a6c; } .c10 { background: #6f8489; }

.canvas { flex: 1; background: #fff; min-width: 0; }
.map { display: block; width: 966px; height: 527px; }
.w { fill: #6870d0; stroke: #34345a; stroke-width: 3; stroke-linejoin: round; }
.b { fill: #8b5029; stroke: #232323; stroke-width: 2.400; stroke-linejoin: round; }
.g { fill: none; stroke: #231a14; stroke-width: 2.200; }
.r { fill: none; stroke: #2f2f40; stroke-width: 4; stroke-linejoin: round; }
.rb { stroke: #33355f; stroke-width: 6.500; }
.rw { fill: none; stroke: #5a60b8; stroke-width: 8; }
.l { fill: none; stroke: #2a2a3a; stroke-width: 2.400; }
.hole { fill: #fff; }
.ta { font: 11px "Noto Sans", sans-serif; fill: #444; }
.tl { font: 700 8px "Noto Sans", sans-serif; fill: #222; }
.tr { font: 700 8px "Noto Sans", sans-serif; fill: #c23a34; }
.tf { font: 700 7px "Noto Sans", sans-serif; fill: #aaa; }
.tq { font: 700 13px "Noto Sans", sans-serif; fill: #fff; }
.tk { font: 700 15px "Noto Sans", sans-serif; fill: #111; }
.tm { font: 700 8px "Noto Sans", sans-serif; fill: #222; }
```
